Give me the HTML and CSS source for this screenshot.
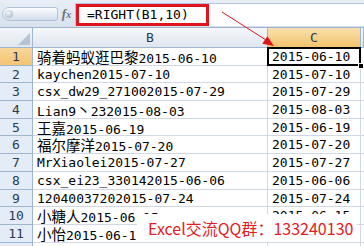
FILE: index.html
```html
<!DOCTYPE html>
<html>
<head>
<meta charset="utf-8">
<link rel="stylesheet" href="styles.css">
</head>
<body>
<div class="app">
  <div class="fbar">
    <div class="namebox"><span class="knob"></span></div>
    <div class="fx">f<span class="x">x</span></div>
    <div class="input"><span class="formula">=RIGHT(B1,10)</span></div>
  </div>
  <div class="sheet">
    <div class="corner"><span class="tri"></span></div><div class="ch">B</div><div class="ch sel">C</div><div class="ch"></div>

    <div class="rh sel">1</div><div class="c"><span class="cjk">骑着蚂蚁逛巴黎</span>2015-06-10</div><div class="c active">2015-06-10<span class="handle"></span></div><div class="c"></div>
    <div class="rh">2</div><div class="c">kaychen2015-07-10</div><div class="c">2015-07-10</div><div class="c"></div>
    <div class="rh">3</div><div class="c">csx_dw29_271002015-07-29</div><div class="c">2015-07-29</div><div class="c"></div>
    <div class="rh">4</div><div class="c">Lian9<span class="cjk">丶</span>232015-08-03</div><div class="c">2015-08-03</div><div class="c"></div>
    <div class="rh">5</div><div class="c"><span class="cjk">王嘉</span>2015-06-19</div><div class="c">2015-06-19</div><div class="c"></div>
    <div class="rh">6</div><div class="c"><span class="cjk">福尔摩洋</span>2015-07-20</div><div class="c">2015-07-20</div><div class="c"></div>
    <div class="rh">7</div><div class="c">MrXiaolei2015-07-27</div><div class="c">2015-07-27</div><div class="c"></div>
    <div class="rh">8</div><div class="c">csx_ei23_330142015-06-06</div><div class="c">2015-06-06</div><div class="c"></div>
    <div class="rh">9</div><div class="c">12040037202015-07-24</div><div class="c">2015-07-24</div><div class="c"></div>
    <div class="rh">10</div><div class="c"><span class="cjk">小糖人</span>2015-06-15</div><div class="c">2015-06-15</div><div class="c"></div>
    <div class="rh">11</div><div class="c"><span class="cjk">小怡</span>2015-06-15</div><div class="c">2015-06-15</div><div class="c"></div>
    <div class="rh"></div><div class="c"></div><div class="c"></div><div class="c"></div>
  </div>
  <svg class="arrow" width="364" height="246" viewBox="0 0 364 246">
    <line x1="222" y1="12" x2="266" y2="40" stroke="#e0141e" stroke-width="1"/>
    <polygon points="274,46 262.3,43.8 267.3,36.2" fill="#e0141e"/>
  </svg>
  <div class="note">Excel交流QQ群：133240130</div>
</div>
</body>
</html>
```

FILE: styles.css
```css
* { box-sizing: border-box; margin: 0; padding: 0; }
body {
  width: 364px;
  height: 246px;
  overflow: hidden;
  background: #fff;
  font-family: "DejaVu Sans Mono", "Noto Sans CJK SC", monospace;
  font-size: 13px;
  color: #000;
}
.app { position: relative; width: 364px; height: 246px; overflow: hidden; }

.fbar {
  display: flex;
  align-items: flex-start;
  height: 28px;
  background: linear-gradient(#e8eef6, #d8e2ee);
  border-bottom: 1px solid #9fb4cc;
}
.namebox {
  position: relative;
  width: 56px;
  height: 14px;
  margin: 7px 0 0 2px;
  border-radius: 7px 3px 3px 7px;
  background: linear-gradient(#fbfcfe, #d3deea);
  border: 1px solid #b2c2d6;
}
.knob {
  position: absolute;
  left: 2px;
  top: 2px;
  width: 8px;
  height: 8px;
  border-radius: 50%;
  background: radial-gradient(circle at 40% 35%, #f4f7fb, #9aabbf);
}
.fx {
  width: 17px;
  margin-top: 8px;
  text-align: center;
  font-family: "Liberation Serif", serif;
  font-style: italic;
  font-weight: bold;
  font-size: 13px;
  line-height: 12px;
  color: #6b7480;
}
.fx .x { font-size: 10px; }
.input {
  flex: 1;
  height: 23px;
  margin-top: 3px;
  background: #fff;
  border-top: 1px solid #b4c5d9;
  border-left: 1px solid #b4c5d9;
}
.formula {
  display: inline-block;
  width: 133px;
  height: 22px;
  border: 3px solid #e0141e;
  padding-left: 8px;
  line-height: 16px;
  font-size: 13px;
}

.sheet {
  display: grid;
  grid-template-columns: 33px 235px 93px 3px;
  grid-template-rows: 20px repeat(11, 17.7px) 10px;
}
.corner {
  position: relative;
  background: linear-gradient(#f3f6fa, #e1e7ef);
  border-right: 1px solid #9eb6ce;
  border-bottom: 1px solid #9eb6ce;
}
.tri {
  position: absolute;
  right: 2px;
  bottom: 2px;
  width: 0;
  height: 0;
  border-left: 12px solid transparent;
  border-bottom: 12px solid #b6c4d5;
}
.ch {
  background: linear-gradient(#f5f7fb, #e0e6ef);
  border-right: 1px solid #9eb6ce;
  border-bottom: 1px solid #9eb6ce;
  text-align: center;
  line-height: 19px;
  color: #2a3b52;
}
.ch.sel { background: linear-gradient(#fae0ae, #f2c36c); border-bottom-color: #c29b4f; }
.rh {
  background: #e4ecf7;
  border-right: 1px solid #9eb6ce;
  border-bottom: 1px solid #9eb6ce;
  text-align: center;
  line-height: 17px;
  color: #2a3b52;
}
.rh.sel { background: linear-gradient(#f9d79b, #f4c373); }
.c {
  position: relative;
  border-right: 1px solid #d0d7e5;
  border-bottom: 1px solid #d0d7e5;
  padding-left: 4px;
  line-height: 17px;
  white-space: nowrap;
  overflow: visible;
}
.cjk {
  display: inline-block;
  height: 17px;
  line-height: 17px;
  font-family: "Noto Sans CJK SC", sans-serif;
  font-size: 14.5px;
}
.c.active::after {
  content: "";
  position: absolute;
  left: -1px;
  top: -1px;
  right: -1px;
  bottom: -1px;
  border: 2px solid #000;
}
.handle {
  position: absolute;
  right: -4px;
  bottom: -4px;
  width: 6px;
  height: 6px;
  background: #000;
  border: 1px solid #fff;
  z-index: 2;
}
.arrow { position: absolute; left: 0; top: 0; pointer-events: none; }
.note {
  position: absolute;
  left: 137px;
  top: 214px;
  width: 220px;
  height: 28px;
  background: #fff;
  padding-left: 11px;
  font-family: "Noto Sans CJK SC", sans-serif;
  font-size: 16px;
  line-height: 28px;
  color: #e31b23;
}
```
